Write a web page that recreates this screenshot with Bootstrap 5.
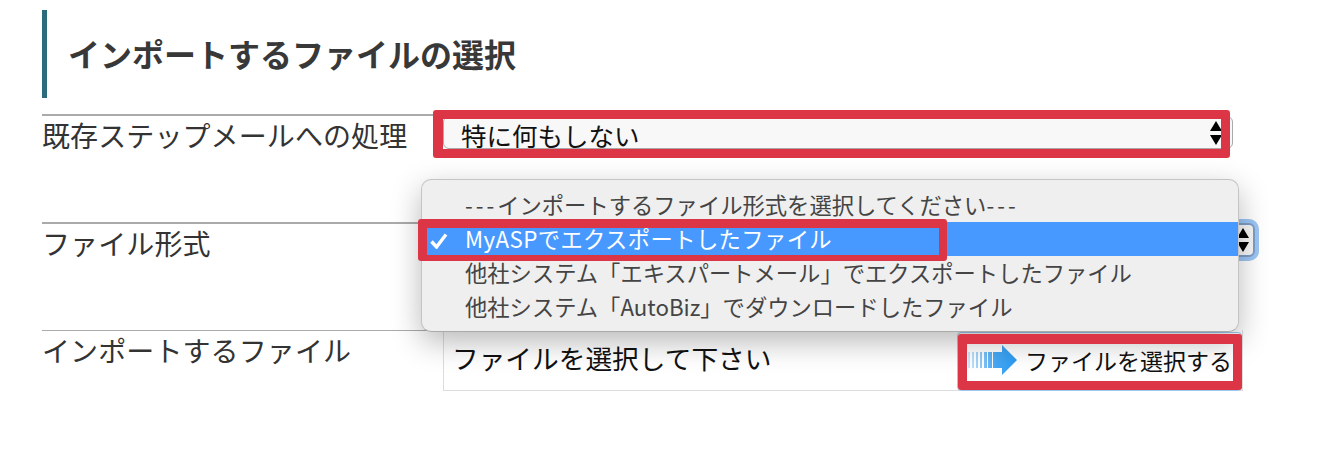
<!DOCTYPE html>
<html lang="ja"><head><meta charset="utf-8"><title>インポート</title>
<link href="https://cdn.jsdelivr.net/npm/bootstrap@5.3.0/dist/css/bootstrap.min.css" rel="stylesheet">
<style>
html,body{height:456px;overflow:hidden;background:#fff}
body{font-family:"Noto Sans CJK JP","Liberation Sans",sans-serif;color:#333}
.sheet{position:relative;padding:10px 60px 0 42px}
.sect-head{border-left:5px solid #2a6b7c;height:88px;padding-left:21px;margin:0 0 16px;font-size:32px;font-weight:700;line-height:86px;color:#383838}
.form-line{height:108px;font-size:28px;line-height:38px}
.line-label{width:401px;flex:none;border-top:2px solid #aaa;letter-spacing:.1px}
.last .line-label{border-top-width:1px}
.fake-select{position:relative;flex:none;height:33px;margin-top:2px;background:#f8f8f8;border:1px solid #aaa;border-radius:6px;font-size:25.500px;line-height:35px;padding-left:17px;color:#111;width:790px}
.fake-select svg{position:absolute;right:9px;top:3px}
.focus-select{width:812px;height:34px;margin-top:1px;border:2px solid #7d9fc8;box-shadow:0 0 0 4px #9cc6f5}
.focus-select svg{right:3px;top:2px}
.red-box{position:absolute;border:solid #dc3545;border-radius:3px;pointer-events:none}
.red-a{left:433px;top:110px;width:797px;height:48px;border-width:9px 9px 9px 10px}
.red-b{left:418px;top:219px;width:529px;height:42px;border-width:9px 8px 6px 9px}
.red-c{left:958px;top:334px;width:284px;height:56px;border-width:10px 9px 9px 9px}
.drop-menu{position:absolute;left:421px;top:179px;width:818px;height:153px;background:#efefef;border:1px solid #c4c4c4;border-bottom-color:#aaa;border-radius:10px;padding:8px 0 0;box-shadow:0 10px 30px rgba(0,0,0,.28);font-size:22.300px;color:#444;overflow:hidden}
.menu-row{height:34px;line-height:33px;padding-left:43px;position:relative;white-space:nowrap}
.menu-row.on{background:#4899ff;color:#fff;letter-spacing:.4px}
.menu-row.on svg{position:absolute;left:8px;top:11px}
.dash-run{letter-spacing:3px}
.file-box{flex:none;width:800px;height:61px;border:1px solid #ddd;border-top:0;font-size:26.700px;line-height:56px;color:#111;padding:0 0 0 8px}
.pick-btn{flex:none;white-space:nowrap;font-size:23px;line-height:30px;color:#111;gap:8px;padding:0 0 4px 9px;width:285px;height:59px;margin-top:2px;border:1px solid #9cc8f0;border-radius:4px;background:#fff}
</style></head><body>
<div class="sheet">
<h2 class="sect-head">インポートするファイルの選択</h2>
<div class="form-line d-flex"><div class="line-label">既存ステップメールへの処理</div>
<div class="fake-select">特に何もしない<svg width="14" height="26" viewBox="0 0 14 26"><path d="M7 1 13 11H1zM1 15H13L7 25z" fill="#000"/></svg></div></div>
<div class="form-line d-flex"><div class="line-label">ファイル形式</div>
<div class="fake-select focus-select"><svg width="14" height="26" viewBox="0 0 14 26"><path d="M7 1 13 11H1zM1 15H13L7 25z" fill="#000"/></svg></div></div>
<div class="form-line last d-flex"><div class="line-label">インポートするファイル</div>
<div class="file-box d-flex justify-content-between"><span>ファイルを選択して下さい</span>
<span class="pick-btn d-flex align-items-center"><svg width="50" height="30" viewBox="0 0 50 30"><defs><linearGradient id="ar" x1="0" x2="1" y1="0" y2="0"><stop offset="0" stop-color="#cfe9fc"/><stop offset=".55" stop-color="#48a8f4"/><stop offset="1" stop-color="#2b9af0"/></linearGradient></defs><path d="M1 7h2v16H1zM5 7h2v16H5zM9 7h2v16H9zM13 7h2v16h-2zM17 7h3v16h-3zM21 7h4v16h-4zM26 7h9V0l15 15-15 15v-7h-9z" fill="url(#ar)"/></svg>ファイルを選択する</span></div></div>
<div class="drop-menu">
<div class="menu-row"><span class="dash-run">---</span>インポートするファイル形式を選択してください<span class="dash-run">---</span></div>
<div class="menu-row on"><svg width="18" height="16" viewBox="0 0 18 16"><path d="M1.500 8.500 6.500 14 16 1.500" fill="none" stroke="#fff" stroke-width="3.400"/></svg>MyASPでエクスポートしたファイル</div>
<div class="menu-row">他社システム「エキスパートメール」でエクスポートしたファイル</div>
<div class="menu-row">他社システム「AutoBiz」でダウンロードしたファイル</div>
</div>
<div class="red-box red-a"></div><div class="red-box red-b"></div><div class="red-box red-c"></div>
</div>
</body></html>
